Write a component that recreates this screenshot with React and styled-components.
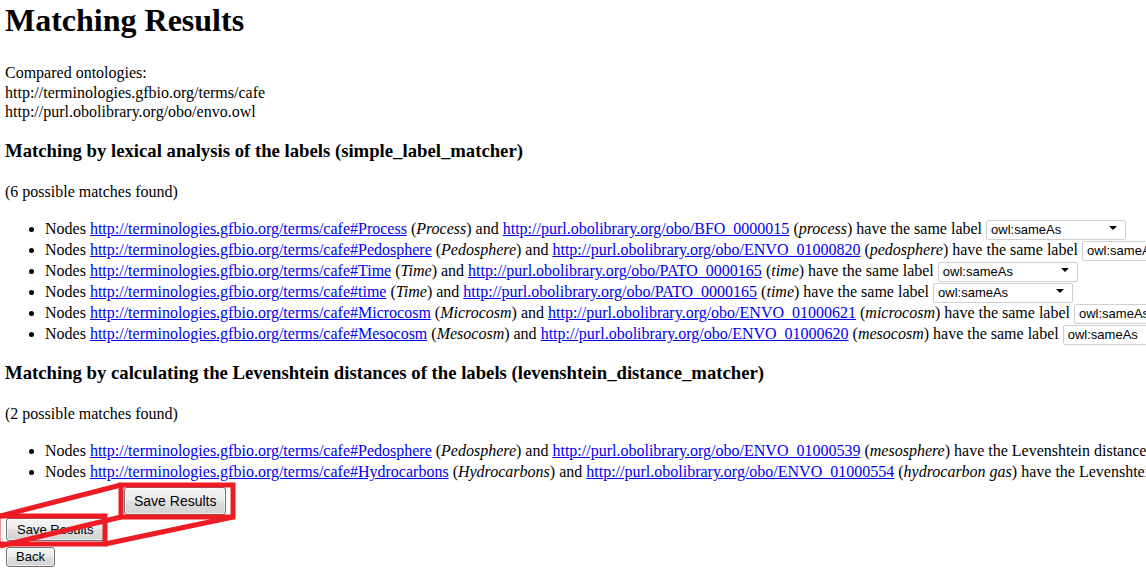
import React from 'react'
import styled, { createGlobalStyle } from 'styled-components'

const GlobalStyle = createGlobalStyle`
  html, body {
    margin: 0;
    padding: 0;
    background: #fff;
    overflow: hidden;
  }
  body {
    font-family: "Liberation Serif", "Times New Roman", serif;
    font-size: 16px;
    color: #000;
  }
`

const Page = styled.div`
  position: relative;
  padding: 0 5px;
  width: 1141px;
  overflow: hidden;
`

const Title = styled.h1`
  font-size: 32px;
  font-weight: bold;
  margin: 2px 0 0;
  line-height: 37px;
`

const Para = styled.p`
  margin: ${(p) => p.$top || 16}px 0 16px;
  line-height: 19.5px;
`

const Section = styled.h3`
  font-size: 18.72px;
  font-weight: bold;
  margin: 18.7px 0 20px;
`

const List = styled.ul`
  margin: 16px 0;
  padding-left: 40px;
  list-style: disc;
`

const Item = styled.li`
  white-space: nowrap;
  height: 21px;
  line-height: 21px;
`

const Link = styled.a`
  color: #0000ee;
  text-decoration: underline;
`

const SelectBox = styled.span`
  position: relative;
  display: inline-block;
  vertical-align: middle;
  margin-top: -2px;
  &::after {
    content: '';
    position: absolute;
    right: 9px;
    top: 8px;
    border-left: 4px solid transparent;
    border-right: 4px solid transparent;
    border-top: 4px solid #000;
    pointer-events: none;
  }
`

const Select = styled.select`
  appearance: none;
  width: 140px;
  height: 20px;
  padding: 0 4px;
  border: 1px solid #cfcfcf;
  border-radius: 2px;
  background: #fff;
  font-family: "Liberation Sans", Arial, sans-serif;
  font-size: 13px;
  color: #000;
  line-height: 18px;
`

const Buttons = styled.div`
  display: flex;
  flex-direction: column;
  align-items: flex-start;
  gap: 6px;
  margin-top: 36px;
  padding-left: 1px;
`

const Button = styled.button`
  font-family: "Liberation Sans", Arial, sans-serif;
  font-size: ${(p) => p.$size || 13}px;
  color: #000;
  height: ${(p) => p.$h || 23}px;
  padding: 0 ${(p) => p.$pad || 10}px;
  border: 1px solid #707070;
  border-radius: 3px;
  background: linear-gradient(#f4f4f4 0%, #ececec 49%, #dfdfdf 50%, #d2d2d2 100%);
  box-shadow: inset 0 0 0 1px rgba(255, 255, 255, 0.6);
  cursor: pointer;
`

const Callout = styled.div`
  position: absolute;
  left: 0;
  top: 0;
  width: 1146px;
  height: 584px;
  pointer-events: none;
`

const Zoomed = styled.div`
  position: absolute;
  left: 124px;
  top: 487px;
`

const SameSelect = () => (
  <SelectBox>
    <Select defaultValue='owl:sameAs'>
      <option>owl:sameAs</option>
      <option>owl:equivalentClass</option>
      <option>rdfs:subClassOf</option>
    </Select>
  </SelectBox>
)

const cafe = 'http://terminologies.gfbio.org/terms/cafe#'
const obo = 'http://purl.obolibrary.org/obo/'

const simple = [
  ['Process', 'Process', 'BFO_0000015', 'process'],
  ['Pedosphere', 'Pedosphere', 'ENVO_01000820', 'pedosphere'],
  ['Time', 'Time', 'PATO_0000165', 'time'],
  ['time', 'Time', 'PATO_0000165', 'time'],
  ['Microcosm', 'Microcosm', 'ENVO_01000621', 'microcosm'],
  ['Mesocosm', 'Mesocosm', 'ENVO_01000620', 'mesocosm'],
]

const leven = [
  ['Pedosphere', 'Pedosphere', 'ENVO_01000539', 'mesosphere'],
  ['Hydrocarbons', 'Hydrocarbons', 'ENVO_01000554', 'hydrocarbon gas'],
]

const Match = ({ row, tail }) => (
  <Item>
    Nodes <Link href='#'>{cafe + row[0]}</Link> (<i>{row[1]}</i>) and{' '}
    <Link href='#'>{obo + row[2]}</Link> (<i>{row[3]}</i>) {tail} <SameSelect />
  </Item>
)

const App = () => {
  return (
    <Page>
      <GlobalStyle />
      <Title>Matching Results</Title>
      <Para $top={24}>
        Compared ontologies:
        <br />
        http://terminologies.gfbio.org/terms/cafe
        <br />
        http://purl.obolibrary.org/obo/envo.owl
      </Para>

      <Section>Matching by lexical analysis of the labels (simple_label_matcher)</Section>
      <Para>(6 possible matches found)</Para>
      <List>
        {simple.map((r, i) => (
          <Match key={i} row={r} tail='have the same label' />
        ))}
      </List>

      <Section>Matching by calculating the Levenshtein distances of the labels (levenshtein_distance_matcher)</Section>
      <Para>(2 possible matches found)</Para>
      <List>
        {leven.map((r, i) => (
          <Match key={i} row={r} tail='have the Levenshtein distance 2' />
        ))}
      </List>

      <Buttons>
        <Button>Save Results</Button>
        <Button $h={20} $pad={9}>Back</Button>
      </Buttons>

      <Callout>
        <Zoomed>
          <Button $size={14} $h={28} $pad={9}>Save Results</Button>
        </Zoomed>
        <svg width='1146' height='584' style={{ position: 'absolute', left: 0, top: 0 }}>
          <g stroke='#ed1c24' strokeWidth='5' fill='none'>
            <rect x='-2' y='516' width='107' height='28' />
            <rect x='121' y='485' width='112' height='32' />
            <line x1='0' y1='516' x2='121' y2='485' />
            <line x1='0' y1='546' x2='121' y2='517' />
            <line x1='105' y1='544' x2='233' y2='517' />
          </g>
        </svg>
      </Callout>
    </Page>
  )
}

export default App
